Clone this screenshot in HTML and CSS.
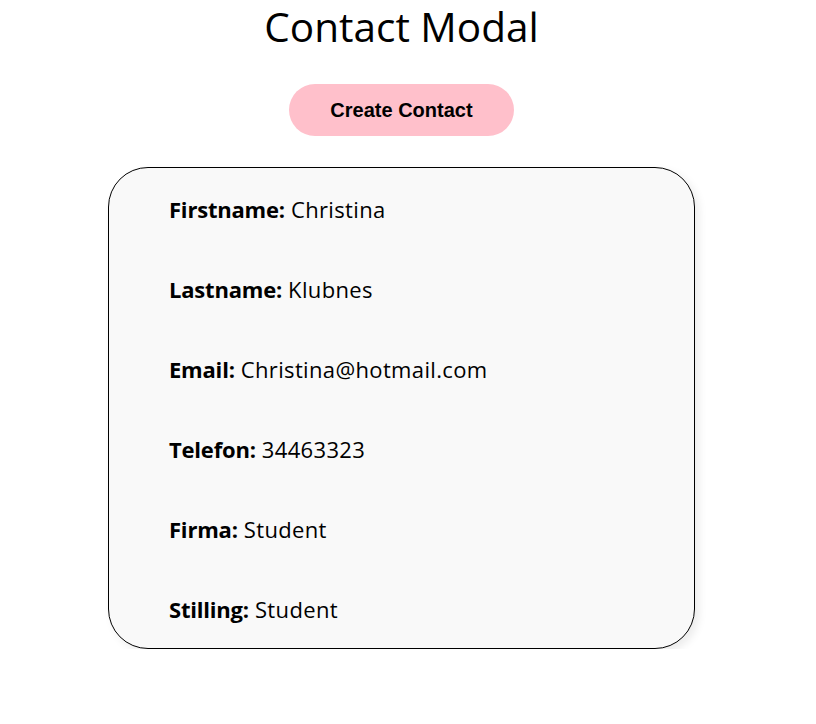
FILE: index.html
```html
<!DOCTYPE html>
<html>
<head>
<meta charset="utf-8">
<link rel="stylesheet" href="styles.css">
</head>
<body>
<div class="page">
  <h1 class="title">Contact Modal</h1>
  <button class="create-btn">Create Contact</button>
  <div class="card">
    <p class="row"><b>Firstname:</b> Christina</p>
    <p class="row"><b>Lastname:</b> Klubnes</p>
    <p class="row"><b>Email:</b> Christina@hotmail.com</p>
    <p class="row"><b>Telefon:</b> 34463323</p>
    <p class="row"><b>Firma:</b> Student</p>
    <p class="row"><b>Stilling:</b> Student</p>
  </div>
</div>
</body>
</html>
```
FILE: styles.css
```css
html, body {
  margin: 0;
  padding: 0;
  background: #ffffff;
}
.page {
  display: flex;
  flex-direction: column;
  align-items: center;
  padding-right: 13px;
  font-family: "Open Sans", "Noto Sans", sans-serif;
  color: #000;
}
.title {
  margin: 0;
  font-size: 40.5px;
  font-weight: 400;
  line-height: 54px;
}
.create-btn {
  margin-top: 30px;
  width: 225px;
  height: 52px;
  border: none;
  border-radius: 26px;
  background: #ffc0cb;
  font-family: "Liberation Sans", Arial, sans-serif;
  font-weight: 700;
  font-size: 20px;
  color: #000;
}
.card {
  margin-top: 31px;
  width: 525px;
  height: 455px;
  border: 1px solid #000;
  border-radius: 40px;
  background: #f9f9f9;
  box-shadow: 4px 4px 8px rgba(0,0,0,0.08);
  display: flex;
  flex-direction: column;
  padding: 25px 0 0 60px;
  gap: 48px;
}
.row {
  margin: 0;
  font-size: 22px;
  line-height: 32px;
  letter-spacing: 0.35px;
}
.row b {
  letter-spacing: -0.2px;
}
```
